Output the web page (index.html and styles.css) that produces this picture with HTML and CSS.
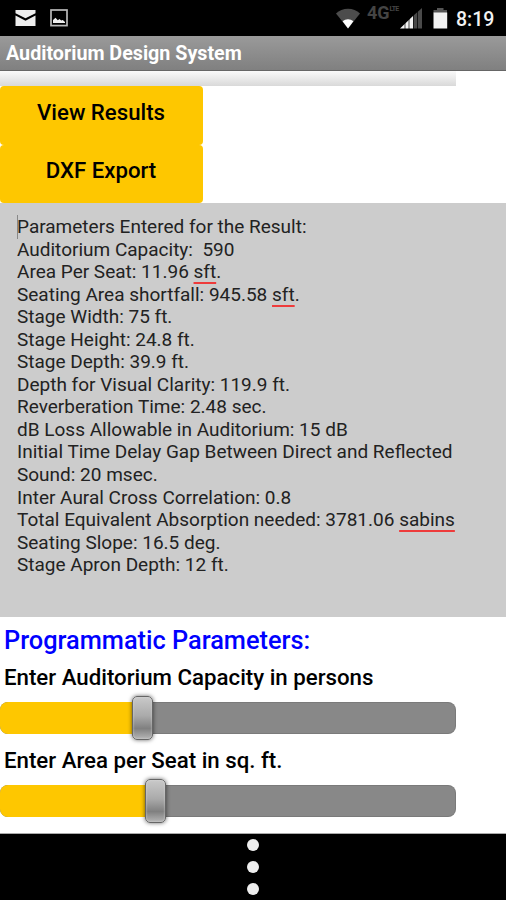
FILE: index.html
```
<!DOCTYPE html>
<html lang="en">
<head>
    <meta charset="utf-8">
    <title>Auditorium Design System</title>
    <link rel="stylesheet" href="styles.css">
</head>
<body>

    <div class="status-bar">
        <svg class="mail-icon" width="22" height="18" viewBox="0 0 22 18">
            <path d="M0.5 1h20v3.2L10.5 9.3 0.5 4.2z" fill="#eee"/>
            <path d="M0.5 6.6l10 5.2 10-5.2V17h-20z" fill="#eee"/>
        </svg>
        <svg class="photo-icon" width="18" height="18" viewBox="0 0 18 18">
            <rect x="1" y="1" width="16" height="15.6" fill="none" stroke="#b9b9b9" stroke-width="1.7"/>
            <path d="M3 14v-3l2.5-2.3 2.3 2.5L9.5 10l1.7 1.5 1.6-.5L15 13v1H3z" fill="#eee"/>
        </svg>
        <svg class="wifi-icon" width="26" height="22" viewBox="0 0 26 22">
            <path d="M1 6.5C7 .2 19 .2 25 6.5L13 21.5z" fill="#4c4c4c"/>
            <path d="M7.6 14.2c3-2.7 7.800-2.7 10.800 0L13 21.5z" fill="#fff"/>
        </svg>
        <div class="network">4G<span class="lte">LTE</span></div>
        <svg class="signal-icon" width="23" height="22" viewBox="0 0 23 22">
            <path d="M0 21.5L13.5 8.5v13z" fill="#f4f4f4"/>
            <path d="M13.5 8.5L22 1v20.5h-8.5z" fill="#4a4a4a"/>
            <path d="M5 14v8M9 10v12M13.5 6v16M17.5 3v19" stroke="#000" stroke-width=".7"/>
        </svg>
        <svg class="battery-icon" width="15" height="22" viewBox="0 0 15 22">
            <path d="M0.5 3h3.5V1h6.500v2h3.500v3H.5z" fill="#555"/>
            <path d="M0.5 5.5h13.700V21.5H.5z" fill="#f2f2f2"/>
        </svg>
        <div class="clock">8:19</div>
    </div>

    <div class="title-bar">Auditorium Design System</div>

    <div class="screen">
        <div class="strip"></div>
        <button class="btn">View Results</button>
        <button class="btn">DXF Export</button>

        <div class="results"><span class="cursor"></span>Parameters Entered for the Result:
Auditorium Capacity:  590
Area Per Seat: 11.96 <span class="typo">sft</span>.
Seating Area shortfall: 945.58 <span class="typo">sft</span>.
Stage Width: 75 ft.
Stage Height: 24.8 ft.
Stage Depth: 39.9 ft.
Depth for Visual Clarity: 119.9 ft.
Reverberation Time: 2.48 sec.
dB Loss Allowable in Auditorium: 15 dB
Initial Time Delay Gap Between Direct and Reflected
Sound: 20 msec.
Inter Aural Cross Correlation: 0.8
Total Equivalent Absorption needed: 3781.06 <span class="typo">sabins</span>
Seating Slope: 16.5 deg.
Stage Apron Depth: 12 ft.</div>

        <h2>Programmatic Parameters:</h2>
        <label>Enter Auditorium Capacity in persons</label>
        <div class="slider capacity"><div class="fill"></div><div class="thumb"></div></div>
        <label>Enter Area per Seat in sq. ft.</label>
        <div class="slider area"><div class="fill"></div><div class="thumb"></div></div>
    </div>

    <div class="nav-bar"><i></i><i></i><i></i></div>

</body>
</html>
```
FILE: styles.css
```
* {
    box-sizing: border-box;
}
body {
    margin: 0;
    width: 506px;
    height: 900px;
    overflow: hidden;
    display: flex;
    flex-direction: column;
    background: #fff;
    font-family: Roboto, sans-serif;
    color: #000;
}
.status-bar {
    height: 36px;
    flex: none;
    display: flex;
    align-items: flex-start;
    background: #000;
    color: #f2f2f2;
}
.status-bar svg {
    flex: none;
}
.mail-icon {
    margin: 9px 0 0 15px;
}
.photo-icon {
    margin: 9px 0 0 13px;
}
.wifi-icon {
    margin: 7px 0 0 267px;
}
.network {
    display: flex;
    width: 32px;
    margin: 3px 0 0 6px;
    font-size: 18px;
    line-height: 20px;
    font-weight: 700;
    color: #444;
}
.lte {
    font-size: 7px;
    line-height: 12px;
    letter-spacing: -0.8px;
}
.signal-icon {
    margin: 7px 0 0 1px;
}
.battery-icon {
    margin: 7px 0 0 10px;
}
.clock {
    margin: 8px 0 0 8px;
    font-size: 19.5px;
    line-height: 23px;
    font-weight: 500;
}
.title-bar {
    height: 35px;
    flex: none;
    padding-left: 6px;
    border-bottom: 1px solid #666;
    background: linear-gradient(#9a9a9a, #808080);
    color: #fff;
    font-size: 19.7px;
    line-height: 36px;
    font-weight: 700;
    white-space: nowrap;
}
.screen {
    height: 763px;
    flex: none;
    border-bottom: 1px solid #aaa;
}
.strip {
    width: 456px;
    height: 15px;
    background: linear-gradient(#fafafa, #d9d9d9);
}
.btn {
    display: block;
    width: 203px;
    height: 58.5px;
    border: none;
    border-radius: 4px;
    padding: 0 1px 7px 0;
    background: #fec700;
    color: #000;
    font-family: inherit;
    font-size: 22.2px;
    font-weight: 500;
}
.results {
    height: 414px;
    padding: 13px 0 0 17px;
    background: #ccc;
    color: #222;
    font-size: 19px;
    line-height: 22.55px;
    white-space: pre;
}
.cursor {
    display: inline-block;
    width: 1px;
    height: 24px;
    margin: -6px -1px -4px 0;
    vertical-align: middle;
    background: #888;
}
.typo {
    text-decoration: underline 2px #ee3b3b;
    text-decoration-skip-ink: none;
    text-underline-offset: 4px;
}
h2 {
    margin: 0;
    padding: 8px 0 0 4px;
    color: #00f;
    font-size: 25.35px;
    line-height: 30px;
    font-weight: 500;
}
label {
    display: block;
    height: 47px;
    padding: 9px 0 0 4px;
    font-size: 22.25px;
    line-height: 26px;
    font-weight: 500;
    white-space: nowrap;
}
.slider {
    display: flex;
    align-items: center;
    width: 456px;
    height: 32px;
    border: 1px solid #7a7a7a;
    border-left: none;
    border-radius: 8px;
    background: #888;
}
.slider + label {
    height: 51px;
    padding-top: 13px;
}
.fill {
    height: 32px;
    flex: none;
    border-radius: 8px 0 0 8px;
    background: #fec700;
}
.capacity .fill {
    width: 133px;
}
.area .fill {
    width: 146px;
}
.thumb {
    width: 21px;
    height: 44px;
    flex: none;
    margin-left: -1px;
    border: 1px solid #666;
    border-radius: 5px;
    background: linear-gradient(#c9c9c9, #aaa 45%, #808080 75%, #b5b5b5);
    box-shadow: 0 0 4px rgba(0,0,0,0.6), inset 0 0 2px #ddd;
}
.nav-bar {
    height: 66px;
    flex: none;
    display: flex;
    flex-direction: column;
    align-items: center;
    gap: 10px;
    padding-top: 5px;
    background: #000;
}
.nav-bar i {
    width: 12px;
    height: 12px;
    flex: none;
    border-radius: 50%;
    background: #eee;
}
```
